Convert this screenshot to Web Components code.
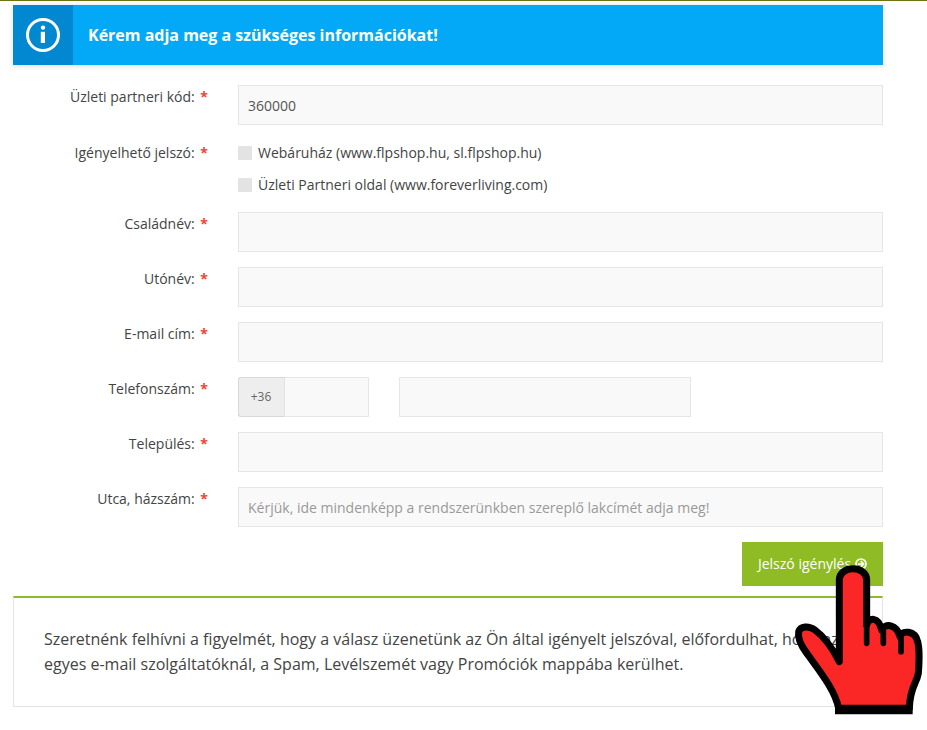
<!DOCTYPE html>
<html lang="hu"><head><meta charset="utf-8"><title>Jelszó igénylés</title>
<style>
html,body{margin:0;background:#fff}
body{font:14px/22px "Open Sans",sans-serif;color:#444;height:730px;overflow:hidden}
</style></head><body>
<x-page>
  <x-alert>Kérem adja meg a szükséges információkat!</x-alert>
  <x-form>
    <x-field label="Üzleti partneri kód:"><x-input value="360000"></x-input></x-field>
    <x-field label="Igényelhető jelszó:" style="margin-top:16px">
      <x-check>Webáruház (www.flpshop.hu, sl.flpshop.hu)</x-check>
      <x-check>Üzleti Partneri oldal (www.foreverliving.com)</x-check>
    </x-field>
    <x-field label="Családnév:"><x-input></x-input></x-field>
    <x-field label="Utónév:"><x-input></x-input></x-field>
    <x-field label="E-mail cím:"><x-input></x-input></x-field>
    <x-field label="Telefonszám:"><x-phone></x-phone></x-field>
    <x-field label="Település:"><x-input></x-input></x-field>
    <x-field label="Utca, házszám:"><x-input placeholder="Kérjük, ide mindenképp a rendszerünkben szereplő lakcímét adja meg!"></x-input></x-field>
  </x-form>
  <x-submit>Jelszó igénylés</x-submit>
  <x-notice>Szeretnénk felhívni a figyelmét, hogy a válasz üzenetünk az Ön által igényelt jelszóval, előfordulhat, hogy az<br>egyes e-mail szolgáltatóknál, a Spam, Levélszemét vagy Promóciók mappába kerülhet.</x-notice>
</x-page>
<x-hand></x-hand>
<script>
function def(name, html, init){
  customElements.define(name, class extends HTMLElement{
    connectedCallback(){
      if(this.shadowRoot) return;
      const r=this.attachShadow({mode:'open'});
      r.innerHTML=html;
      if(init) init(r,this);
    }
  });
}
def('x-page',`<style>:host{display:block;border-top:1px solid #6b7410;padding:4px 44px 0 13px}</style><slot></slot>`);
def('x-alert',`<style>
:host{display:flex;align-items:stretch;height:60px;background:#03a9f6;color:#fff;box-shadow:0 1px 6px rgba(0,0,0,.14);font-weight:700;font-size:16px}
.i{width:60px;background:#0288d1;display:flex;align-items:center;justify-content:center}
.t{display:flex;align-items:center;padding-left:15px}
</style><div class="i"><svg width="36" height="36" viewBox="0 0 36 36"><circle cx="18" cy="18" r="15.5" fill="none" stroke="#fff" stroke-width="3"/><circle cx="18" cy="10.6" r="2.2" fill="#fff"/><path d="M15.8 14.8h4.2V26h-4.2z" fill="#fff"/></svg></div><div class="t"><slot></slot></div>`);
def('x-form',`<style>:host{display:block;padding-top:20px}</style><slot></slot>`);
def('x-field',`<style>
:host{display:grid;grid-template-columns:195px 645px;column-gap:30px;margin-bottom:15px}
.l{text-align:right;padding-top:1px;line-height:22px;color:#444}
.l b{color:#f44336;font-weight:700;margin-left:2px}
.f{display:flex;flex-direction:column;gap:8px}
</style><div class="l"></div><div class="f"><slot></slot></div>`,(r,h)=>{
  const l=r.querySelector('.l');
  l.append(h.getAttribute('label')+' ');
  const b=document.createElement('b');b.textContent='*';l.append(b);
});
def('x-input',`<style>
:host{display:flex;align-items:center;box-sizing:border-box;height:40px;background:#f9f9f9;border:1px solid #e6e6e6;padding:1px 9px 0;font-size:14px;color:#555}
.p{color:#999}
</style><span></span>`,(r,h)=>{
  const s=r.querySelector('span');
  if(h.hasAttribute('placeholder')){s.className='p';s.textContent=h.getAttribute('placeholder')}
  else s.textContent=h.getAttribute('value')||'';
});
def('x-check',`<style>
:host{display:flex;align-items:center;height:24px;gap:6px;color:#444}
i{width:14px;height:14px;background:#e3e3e3;display:block}
</style><i></i><span><slot></slot></span>`);
def('x-phone',`<style>
:host{display:flex;gap:30px}
.b{box-sizing:border-box;height:40px;background:#f9f9f9;border:1px solid #e6e6e6}
.a{width:131px;display:flex;border-radius:3px 0 0 3px}
.c{box-sizing:border-box;width:47px;height:40px;margin:-1px 0 0 -1px;background:#eee;border:1px solid #d8d8d8;border-right-color:#e3e3e3;display:flex;align-items:center;justify-content:center;font-size:12px;color:#666;border-radius:3px 0 0 3px;padding-right:1px}
.d{width:292px}
</style><div class="b a"><div class="c">+36</div></div><div class="b d"></div>`);
def('x-submit',`<style>
:host{display:flex;justify-content:flex-end}
.b{display:flex;align-items:center;justify-content:center;gap:4px;width:141px;height:44px;background:#8fbc24;color:#fff;font-size:14px}
svg{display:block}
</style><div class="b"><slot></slot><svg width="12" height="12" viewBox="0 0 12 12" fill="none" stroke="#fff" stroke-width="1.7"><circle cx="6" cy="6" r="5"/><path d="M2.8 6h5.6M5.8 3.2 8.6 6 5.8 8.8"/></svg></div>`);
def('x-notice',`<style>
:host{display:block;margin-top:10px;box-sizing:border-box;height:111px;border:1px solid #e3e3e3;border-top:2px solid #8fbc24;padding:29px 30px 0;font-size:16px;line-height:25px;color:#444;white-space:nowrap;overflow:hidden}
</style><slot></slot>`);
def('x-hand',`<style>:host{display:block;position:absolute;left:720px;top:530px;width:207px;height:200px}svg{display:block}</style>
<svg width="207" height="200" viewBox="0 0 621 600">
<path d="M356 535C345 480 300 425 262 372C245 350 232 325 236 305C242 288 265 286 285 300C315 322 340 360 358 395L358 150C358 105 440 105 440 150L440 285C445 262 475 258 485 300C495 278 530 282 540 320C545 300 585 300 593 335C600 360 597 405 595 430C590 460 570 470 568 535Z" fill="#fb2626" stroke="#000" stroke-width="21" stroke-linejoin="round"/>
<path d="M440 280V340M490 300V340M543 320V365" fill="none" stroke="#000" stroke-width="17" stroke-linecap="round"/>
<path d="M345 530H578V553H345Z" fill="#000"/>
</svg>`);
</script>
</body></html>
